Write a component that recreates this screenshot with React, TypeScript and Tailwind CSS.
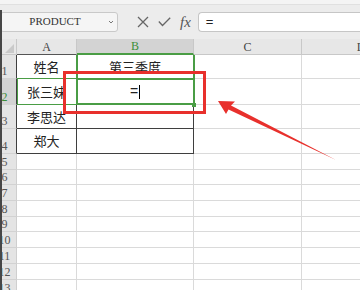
import React from 'react';

const rows = [
  { n: '1', h: 'h-[24px]', a: '姓名', b: '第三季度', table: true },
  { n: '2', h: 'h-[26px]', a: '张三妹', b: '', table: true, active: true },
  { n: '3', h: 'h-[24px]', a: '李思达', b: '', table: true },
  { n: '4', h: 'h-[25px]', a: '郑大', b: '', table: true },
  { n: '5', h: 'h-[16px]' },
  { n: '6', h: 'h-[15px]' },
  { n: '7', h: 'h-[16px]' },
  { n: '8', h: 'h-[16px]' },
  { n: '9', h: 'h-[15px]' },
  { n: '10', h: 'h-[16px]' },
  { n: '11', h: 'h-[16px]' },
  { n: '12', h: 'h-[16px]' },
  { n: '13', h: 'h-[16px]' },
];

const FormulaBar = () => (
  <div className="w-[360px]">
    <div className="h-[5px] bg-[#f4f4f4] border-b border-[#e0e0e0]" />
    <div className="h-[34px] bg-[#ececec] flex items-center">
      <div className="w-[118px] h-[20px] -mt-[1px] rounded-[3px] border border-[#c9c9c9] bg-[#f5f5f5] flex items-center">
        <div className="flex-1 pl-[2px] text-center text-[11px] leading-none text-[#333] font-[family-name:Liberation_Serif,serif]">PRODUCT</div>
        <svg width="8" height="6" viewBox="0 0 8 6" className="mr-[2px]">
          <path d="M2 2 L4 4 L6 2" fill="none" stroke="#777" strokeWidth="1" />
        </svg>
      </div>
      <svg width="12" height="12" viewBox="0 0 12 12" className="ml-[19px]">
        <path d="M1 1 L11 11 M11 1 L1 11" stroke="#666" strokeWidth="1.3" fill="none" />
      </svg>
      <svg width="13" height="10" viewBox="0 0 13 10" className="ml-[9px]">
        <path d="M0.8 4.5 L4.5 8.5 L12.2 0.8" stroke="#666" strokeWidth="1.3" fill="none" />
      </svg>
      <span className="ml-[9px] text-[15px] italic leading-none text-[#555] font-[family-name:Liberation_Serif,serif]">fx</span>
      <div className="ml-[7px] flex-1 h-[20px] -mt-[1px] rounded-l-[4px] border border-r-0 border-[#c6c6c6] bg-white flex items-center pl-[7px]">
        <span className="text-[13px] leading-none text-[#222] font-[family-name:Liberation_Sans,sans-serif]">=</span>
      </div>
    </div>
  </div>
);

const Header = () => (
  <div className="grid grid-cols-[17px_60px_117px_108px_118px] h-[16px] bg-[#e7e7e7] text-[12px] leading-none text-[#444] font-[family-name:Liberation_Serif,serif]">
    <div className="border-r border-b border-[#c8c8c8] relative">
      <svg width="9" height="9" viewBox="0 0 9 9" className="absolute right-[2px] bottom-[1px]">
        <path d="M9 0 L9 9 L0 9 Z" fill="#c9c9c9" />
      </svg>
    </div>
    <div className="border-r border-b border-r-[#c8c8c8] border-b-[#555] flex items-center justify-center">A</div>
    <div className="bg-[#d3d3d3] border-r border-r-[#c8c8c8] border-b-2 border-b-[#4a9d45] flex items-center justify-center text-[#3d8f3a]">B</div>
    <div className="border-r border-b border-[#c8c8c8] flex items-center justify-center">C</div>
    <div className="border-b border-[#c8c8c8] flex items-center justify-center">D</div>
  </div>
);

const Row = ({ r }: { r: (typeof rows)[number] }) => {
  const tb = r.table ? 'border-[#3f3f3f]' : 'border-[#dadada]';
  return (
    <div className={`grid grid-cols-[17px_60px_117px_108px_118px] ${r.h}`}>
      <div
        className={`overflow-hidden border-b border-b-[#d2d2d2] border-r ${r.table ? 'border-r-[#3f3f3f]' : 'border-r-[#cfcfcf]'} ${r.active ? 'bg-[#d3d3d3] text-[#3d8f3a]' : 'bg-[#e4e4e4] text-[#555]'} flex items-end pb-[1px]`}
      >
        <div className="w-[25px] -ml-[8px] shrink-0 text-center text-[12px] leading-none font-[family-name:Liberation_Serif,serif]">{r.n}</div>
      </div>
      <div className={`border-r border-b ${tb} flex items-center justify-center text-[13px] text-[#222] font-[family-name:Noto_Sans_CJK_SC,sans-serif]`}>
        {r.a}
      </div>
      <div className={`border-r border-b ${tb} flex items-center justify-center text-[13px] text-[#222] font-[family-name:Noto_Sans_CJK_SC,sans-serif]`}>
        {r.b}
        {r.active && (
          <span className="flex items-center text-[14px] text-[#222] font-[family-name:Liberation_Sans,sans-serif]">
            =<span className="ml-[1px] w-[1px] h-[14px] bg-black" />
          </span>
        )}
      </div>
      <div className="border-r border-b border-[#dadada]" />
      <div className="border-b border-[#dadada]" />
    </div>
  );
};

export default function App() {
  return (
    <div className="relative w-[360px] h-[290px] overflow-hidden bg-white">
      <FormulaBar />
      <div className="w-[420px]">
        <Header />
        {rows.map((r) => (
          <Row key={r.n} r={r} />
        ))}
      </div>

      {/* window edge on the left */}
      <div className="absolute left-0 top-[10px] bottom-0 w-[2px] bg-[#474747]" />

      {/* selection: B1 column sides, A2 and active B2 */}
      <div className="absolute left-[76px] top-[55px] w-[119px] h-[25px] border-l-2 border-r-2 border-[#4a9d45]" />
      <div className="absolute left-[17px] top-[78px] w-[61px] h-[27px] border border-[#4a9d45]" />
      <div className="absolute left-[76px] top-[78px] w-[119px] h-[27px] border-2 border-[#4a9d45]" />
      <div className="absolute left-[192px] top-[103px] w-[4px] h-[4px] bg-[#4a9d45]" />

      {/* annotation */}
      <div className="absolute left-[63px] top-[71px] w-[143px] h-[43px] border-[3px] border-[#e8302c]" />
      <svg className="absolute left-0 top-0 pointer-events-none" width="360" height="290" viewBox="0 0 360 290">
        <polygon points="218,101 235,101.5 231,105.5 336,160 228.5,109.5 226,114" fill="#e8302c" />
      </svg>
    </div>
  );
}
